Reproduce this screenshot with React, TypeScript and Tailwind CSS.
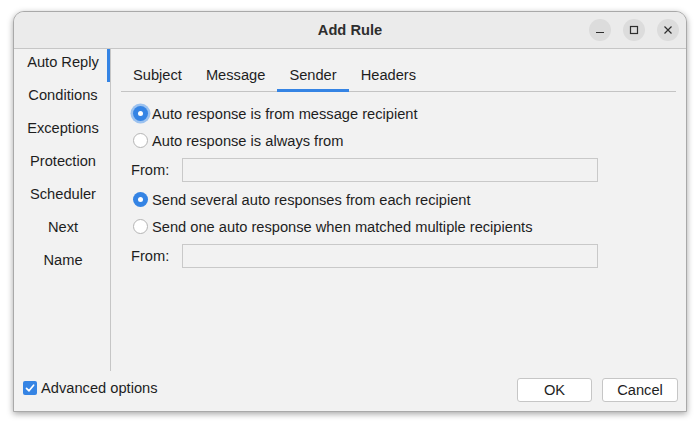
import React from "react";

function Radio({ checked, focus, label }: { checked?: boolean; focus?: boolean; label: string }) {
  return (
    <div className="flex h-[27px] items-center">
      <div className="ml-[2px] flex h-[15px] w-[15px] items-center justify-center">
        {checked ? (
          <div
            className={
              "flex h-[15px] w-[15px] items-center justify-center rounded-full bg-[#3584e4] " +
              (focus ? "shadow-[0_0_0_2.5px_#9cc2ef]" : "")
            }
          >
            <div className="h-[5px] w-[5px] rounded-full bg-white" />
          </div>
        ) : (
          <div className="h-[15px] w-[15px] rounded-full border border-[#b4b4b4] bg-white" />
        )}
      </div>
      <span className="ml-[4px]">{label}</span>
    </div>
  );
}

function FromRow() {
  return (
    <div className="flex h-[32px] items-center">
      <span className="w-[51px]">From:</span>
      <div className="h-[24px] w-[416px] border border-[#c9c9c9] bg-[#f2f2f2]" />
    </div>
  );
}

export default function App() {
  const side = ["Auto Reply", "Conditions", "Exceptions", "Protection", "Scheduler", "Next", "Name"];
  const tabs = ["Subject", "Message", "Sender", "Headers"];
  return (
    <div
      className="h-[428px] w-[700px] bg-white pl-[13px] pt-[11px] text-[14.67px] text-[#1e1e1e]"
      style={{ fontFamily: '"Liberation Sans", Arial, sans-serif' }}
    >
      <div className="flex h-[401px] w-[674px] flex-col overflow-hidden rounded-t-[11px] border border-[#a9a9a9] bg-[#f2f2f2] shadow-[0_2px_6px_rgba(0,0,0,0.35)]">
        {/* title bar */}
        <div className="grid h-[37px] shrink-0 grid-cols-[1fr_auto_1fr] items-center border-b border-[#c6c6c6] bg-[#ebebeb]">
          <div />
          <div className="text-[14.67px] font-bold text-[#2e2e2e]">Add Rule</div>
          <div className="flex items-center justify-end gap-[12px] pr-[7px]">
            <div className="flex h-[22px] w-[22px] items-center justify-center rounded-full bg-[#dcdcdc]">
              <svg width="10" height="10" viewBox="0 0 10 10">
                <path d="M1 7.5 H9" stroke="#2e2e2e" strokeWidth="1.2" />
              </svg>
            </div>
            <div className="flex h-[22px] w-[22px] items-center justify-center rounded-full bg-[#dcdcdc]">
              <svg width="10" height="10" viewBox="0 0 10 10">
                <rect x="1.5" y="1.5" width="7" height="7" fill="none" stroke="#2e2e2e" strokeWidth="1.2" />
              </svg>
            </div>
            <div className="flex h-[22px] w-[22px] items-center justify-center rounded-full bg-[#dcdcdc]">
              <svg width="10" height="10" viewBox="0 0 10 10">
                <path d="M1.5 1.5 L8.5 8.5 M8.5 1.5 L1.5 8.5" stroke="#2e2e2e" strokeWidth="1.2" />
              </svg>
            </div>
          </div>
        </div>

        {/* body */}
        <div className="flex h-[322px] shrink-0">
          <div className="w-[97px] shrink-0 border-r border-[#c6c6c6]">
            {side.map((s, i) => (
              <div
                key={s}
                className={
                  "flex h-[33px] justify-center pt-[2px] pl-[2px] " +
                  (i === 0 ? "shadow-[inset_-3px_0_0_#3584e4]" : "")
                }
              >
                {s}
              </div>
            ))}
          </div>
          <div className="flex-1 pl-[10px] pr-[10px] pt-[9px]">
            <div className="flex border-b border-[#c4c4c4]">
              {tabs.map((t, i) => (
                <div
                  key={t}
                  className={
                    "-mb-px border-b-[3px] px-[12px] pb-[3px] pt-[6px] " +
                    (i === 2 ? "border-[#3584e4]" : "border-transparent")
                  }
                >
                  {t}
                </div>
              ))}
            </div>
            <div className="pl-[10px] pt-[8px]">
              <Radio checked focus label="Auto response is from message recipient" />
              <Radio label="Auto response is always from" />
              <FromRow />
              <Radio checked label="Send several auto responses from each recipient" />
              <Radio label="Send one auto response when matched multiple recipients" />
              <FromRow />
            </div>
          </div>
        </div>

        {/* bottom */}
        <div className="flex flex-1 items-start justify-between pl-[9px] pr-[8px]">
          <div className="mt-[6px] flex items-center">
            <div className="flex h-[14px] w-[14px] items-center justify-center rounded-[2px] bg-[#3584e4]">
              <svg width="12" height="12" viewBox="0 0 12 12">
                <path d="M2.5 6.3 L5 8.8 L9.6 3.2" fill="none" stroke="white" strokeWidth="1.7" strokeLinecap="round" strokeLinejoin="round" />
              </svg>
            </div>
            <span className="ml-[4px]">Advanced options</span>
          </div>
          <div className="mt-[7px] flex gap-[10px]">
            <div className="flex h-[24px] w-[75px] items-center justify-center rounded-[3px] border border-[#c6c6c6] bg-white">
              OK
            </div>
            <div className="flex h-[24px] w-[76px] items-center justify-center rounded-[3px] border border-[#c6c6c6] bg-white">
              Cancel
            </div>
          </div>
        </div>
      </div>
    </div>
  );
}
